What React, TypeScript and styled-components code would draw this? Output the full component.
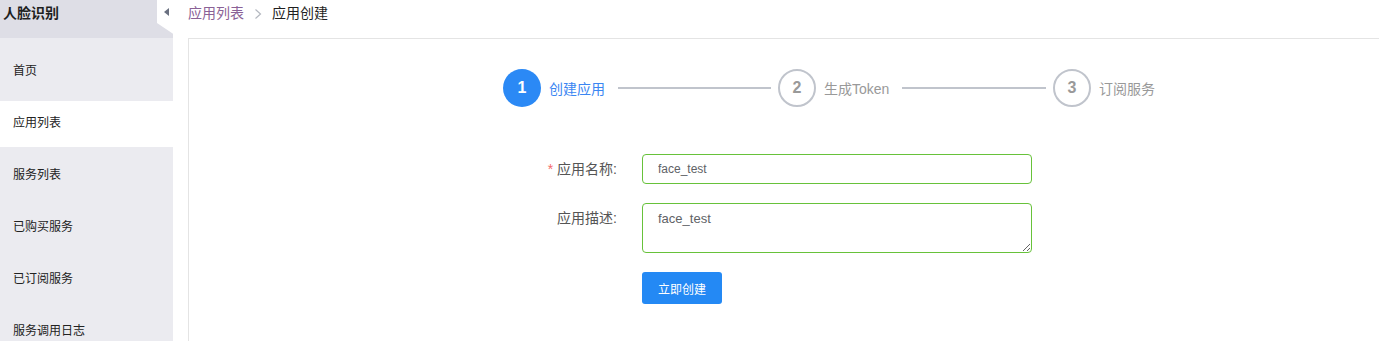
import React from "react";
import styled, { createGlobalStyle, css } from "styled-components";

const GlobalStyle = createGlobalStyle`
  html, body {
    margin: 0;
    padding: 0;
    background: #fff;
    overflow: hidden;
  }
  body {
    font-family: "Liberation Sans", "Noto Sans CJK SC", Arial, sans-serif;
    font-size: 14px;
    color: #303133;
  }
  * { box-sizing: border-box; }
`;

const Page = styled.div`
  display: flex;
  min-height: 100vh;
  width: 100%;
`;

const Sidebar = styled.aside`
  width: 173px;
  flex-shrink: 0;
  background: #ebebf0;
  min-height: 100vh;
`;

const SideHeader = styled.div`
  display: flex;
  height: 38px;
  background: #fff;
`;

const Brand = styled.div`
  width: 157px;
  height: 38px;
  background: #dedee6;
  padding-left: 3px;
  font-size: 14px;
  font-weight: bold;
  line-height: 27px;
  color: #1f1f1f;
`;

const ToggleColumn = styled.div`
  flex: 1;
  display: flex;
  flex-direction: column;
`;

const ToggleArrow = styled.span`
  display: block;
  width: 0;
  height: 0;
  margin: 8px 0 0 7px;
  border-top: 4px solid transparent;
  border-bottom: 4px solid transparent;
  border-right: 5px solid #6a7080;
`;

const Fold = styled.div`
  margin-top: auto;
  height: 15px;
  background: #dedee6;
  clip-path: polygon(0 0, 100% 72%, 100% 100%, 0 100%);
`;

const Menu = styled.ul`
  list-style: none;
  margin: 0;
  padding: 11px 0 0;
`;

const MenuItem = styled.li<{ $active?: boolean }>`
  height: 46px;
  margin-bottom: 6px;
  padding-left: 13px;
  font-size: 12px;
  line-height: 45px;
  color: #222;
  ${(p) =>
    p.$active &&
    css`
      background: #fff;
    `}
`;

const Main = styled.main`
  flex: 1;
  min-width: 0;
  padding-left: 15px;
`;

const Breadcrumb = styled.nav`
  height: 38px;
  display: flex;
  align-items: flex-start;
  font-size: 14px;
  line-height: 27px;
`;

const CrumbLink = styled.span`
  color: #8a6196;
`;

const CrumbSep = styled.span`
  display: flex;
  align-items: center;
  height: 27px;
  margin: 0 10px;
`;

const CrumbCurrent = styled.span`
  color: #1f1f1f;
`;

const Card = styled.section`
  border: 1px solid #e4e4e4;
  margin-right: -20px;
  min-height: 310px;
  padding: 30px 0 0 314px;
`;

const Steps = styled.div`
  display: flex;
  align-items: center;
  height: 38px;
`;

const Step = styled.div<{ $last?: boolean }>`
  display: flex;
  align-items: center;
  width: ${(p) => (p.$last ? "auto" : "275px")};
`;

const Circle = styled.div<{ $active?: boolean }>`
  width: 38px;
  height: 38px;
  flex-shrink: 0;
  border-radius: 50%;
  display: flex;
  align-items: center;
  justify-content: center;
  font-size: 16px;
  font-weight: bold;
  ${(p) =>
    p.$active
      ? css`
          background: #2b89f5;
          color: #fff;
        `
      : css`
          border: 2px solid #c0c4cc;
          color: #999;
        `}
`;

const StepTitle = styled.span<{ $active?: boolean }>`
  margin-left: 8px;
  font-size: 14px;
  white-space: nowrap;
  color: ${(p) => (p.$active ? "#3a86f2" : "#999")};
`;

const StepLine = styled.div`
  flex: 1;
  height: 2px;
  background: #c0c4cc;
  margin: 0 7px 0 13px;
`;

const Form = styled.form`
  margin-top: 47px;
  display: grid;
  grid-template-columns: 139px 390px;
  row-gap: 19px;
`;

const Label = styled.label`
  text-align: right;
  padding-right: 25px;
  font-size: 14px;
  line-height: 30px;
  color: #555;
  white-space: nowrap;
`;

const Required = styled.span`
  color: #f56c6c;
  margin-right: 4px;
`;

const fieldBase = css`
  width: 390px;
  border: 1px solid #67c23a;
  border-radius: 4px;
  padding: 0 15px;
  color: #606266;
  font-family: "Liberation Sans", "Noto Sans CJK SC", Arial, sans-serif;
  outline: none;
  background: #fff;
`;

const TextInput = styled.input`
  ${fieldBase};
  height: 30px;
  font-size: 12px;
`;

const TextArea = styled.textarea`
  ${fieldBase};
  height: 50px;
  padding-top: 5px;
  font-size: 13px;
  line-height: 20px;
  resize: vertical;
  display: block;
`;

const Spacer = styled.div``;

const SubmitButton = styled.button`
  width: 80px;
  height: 32px;
  border: none;
  border-radius: 3px;
  background: #2489f4;
  color: #fff;
  font-size: 12px;
  font-family: "Liberation Sans", "Noto Sans CJK SC", Arial, sans-serif;
  cursor: pointer;
  padding: 0;
`;

const menuItems = ["首页", "应用列表", "服务列表", "已购买服务", "已订阅服务", "服务调用日志"];

const steps = [
  { n: 1, title: "创建应用" },
  { n: 2, title: "生成Token" },
  { n: 3, title: "订阅服务" },
];

export default function App() {
  return (
    <>
      <GlobalStyle />
      <Page>
        <Sidebar>
          <SideHeader>
            <Brand>人脸识别</Brand>
            <ToggleColumn>
              <ToggleArrow />
              <Fold />
            </ToggleColumn>
          </SideHeader>
          <Menu>
            {menuItems.map((m) => (
              <MenuItem key={m} $active={m === "应用列表"}>
                {m}
              </MenuItem>
            ))}
          </Menu>
        </Sidebar>
        <Main>
          <Breadcrumb>
            <CrumbLink>应用列表</CrumbLink>
            <CrumbSep>
              <svg width="8" height="12" viewBox="0 0 8 12">
                <polyline points="1.5,1.5 6.5,6 1.5,10.5" fill="none" stroke="#b4b8c0" strokeWidth="1.2" />
              </svg>
            </CrumbSep>
            <CrumbCurrent>应用创建</CrumbCurrent>
          </Breadcrumb>
          <Card>
            <Steps>
              {steps.map((s, i) => (
                <Step key={s.n} $last={i === steps.length - 1}>
                  <Circle $active={i === 0}>{s.n}</Circle>
                  <StepTitle $active={i === 0}>{s.title}</StepTitle>
                  {i < steps.length - 1 && <StepLine />}
                </Step>
              ))}
            </Steps>
            <Form onSubmit={(e) => e.preventDefault()}>
              <Label>
                <Required>*</Required>应用名称:
              </Label>
              <TextInput defaultValue="face_test" />
              <Label>应用描述:</Label>
              <TextArea defaultValue="face_test" />
              <Spacer />
              <SubmitButton type="submit">立即创建</SubmitButton>
            </Form>
          </Card>
        </Main>
      </Page>
    </>
  );
}
